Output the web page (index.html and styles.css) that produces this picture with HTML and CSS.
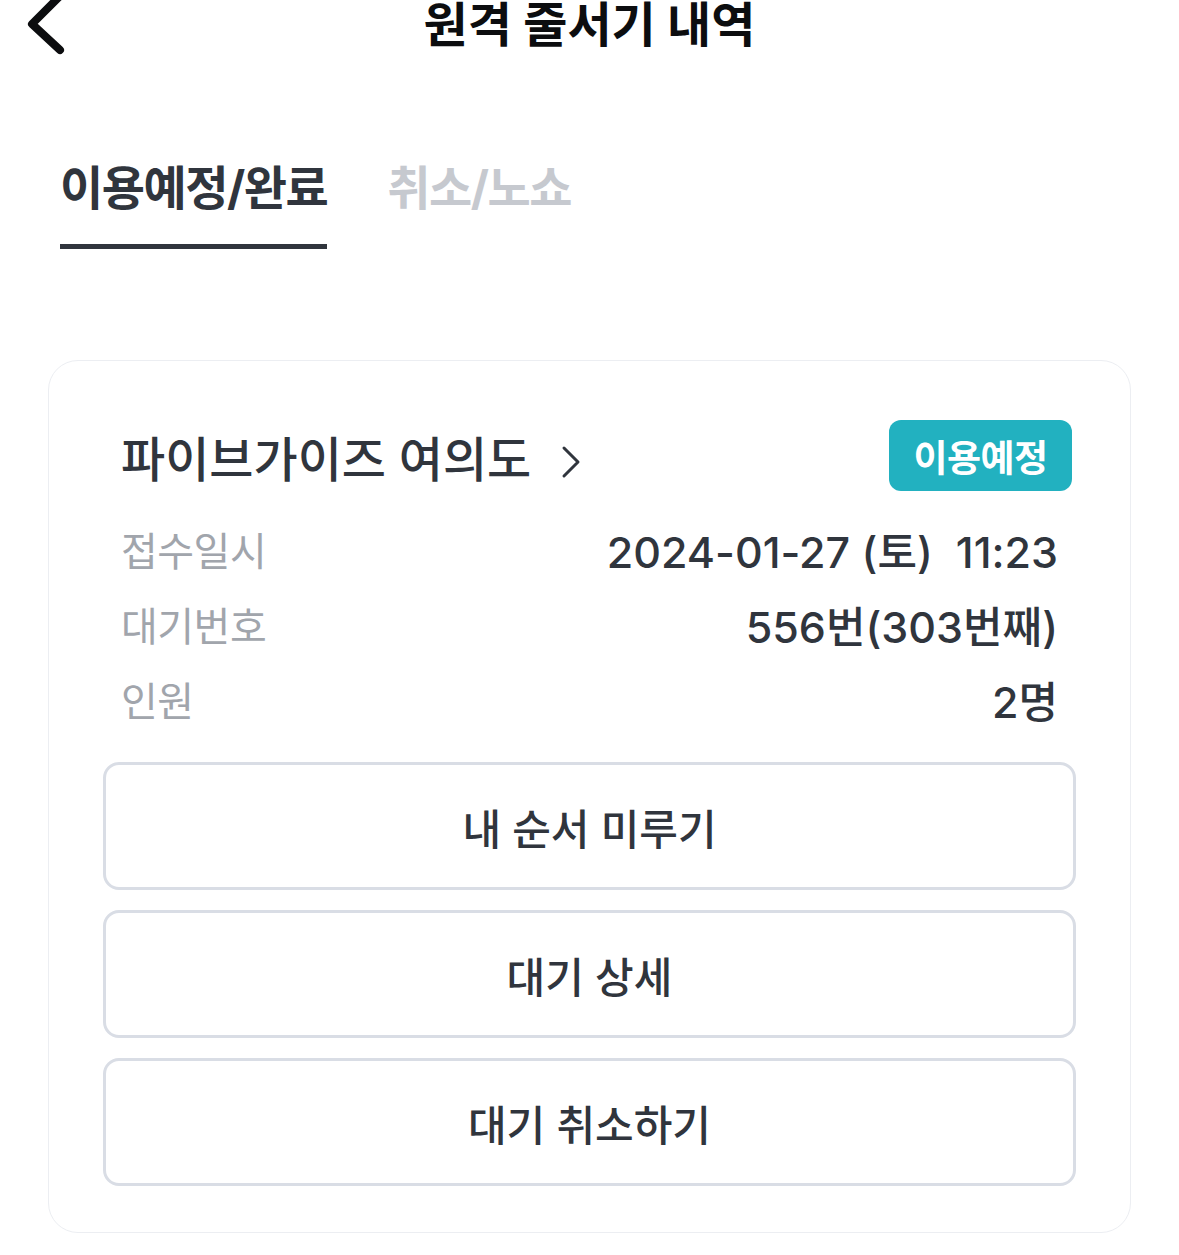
FILE: index.html
```html
<!DOCTYPE html>
<html lang="ko">
<head>
<meta charset="utf-8">
<link rel="stylesheet" href="styles.css">
</head>
<body>
<header class="header">
  <div class="back">
    <svg width="50" height="56" viewBox="0 0 50 56"><path d="M34 -4 L6 24 L34 50" fill="none" stroke="#0c0d0f" stroke-width="8" stroke-linecap="round" stroke-linejoin="round"/></svg>
  </div>
  <h1 class="title">원격 줄서기 내역</h1>
  <div class="spacer"></div>
</header>
<nav class="tabs">
  <div class="tab active">이용예정/완료</div>
  <div class="tab">취소/노쇼</div>
</nav>
<section class="card">
  <div class="card-head">
    <div class="store">파이브가이즈 여의도
      <svg class="chev" width="20" height="34" viewBox="0 0 20 34"><path d="M3 3 L17 17 L3 31" fill="none" stroke="#30353d" stroke-width="3" stroke-linecap="round" stroke-linejoin="round"/></svg>
    </div>
    <div class="badge">이용예정</div>
  </div>
  <div class="rows">
    <div class="row"><span class="label">접수일시</span><span class="value">2024-01-27 (토)&nbsp; 11:23</span></div>
    <div class="row"><span class="label">대기번호</span><span class="value">556번(303번째)</span></div>
    <div class="row"><span class="label">인원</span><span class="value">2명</span></div>
  </div>
  <div class="buttons">
    <button class="btn">내 순서 미루기</button>
    <button class="btn">대기 상세</button>
    <button class="btn">대기 취소하기</button>
  </div>
</section>
</body>
</html>
```
FILE: styles.css
```css
* { box-sizing: border-box; }
body {
  margin: 0;
  background: #fff;
  font-family: Inter, "Noto Sans CJK KR", sans-serif;
  color: #30353d;
  width: 1179px;
}
.header {
  display: grid;
  grid-template-columns: 120px 1fr 120px;
  align-items: start;
  height: 56px;
}
.back { padding-left: 26px; display: flex; }
.title {
  margin: 0;
  text-align: center;
  font-size: 48px;
  font-weight: 700;
  color: #0c0d0f;
  letter-spacing: 0;
  line-height: 50px;
}
.tabs {
  display: flex;
  gap: 60px;
  padding-left: 60px;
  margin-top: 100px;
}
.tab {
  font-size: 47px;
  font-weight: 700;
  color: #c6c9cf;
  letter-spacing: -1.5px;
  line-height: 64px;
  padding-bottom: 24px;
  border-bottom: 5px solid transparent;
}
.tab.active {
  color: #30353d;
  border-bottom-color: #30353d;
}
.card {
  margin: 111px 48px 0 48px;
  border: 1px solid #eceef2;
  border-radius: 30px;
  padding: 59px 54px 46px 54px;
}
.card-head {
  display: flex;
  justify-content: space-between;
  align-items: flex-start;
  padding-left: 18px;
  padding-right: 4px;
}
.store {
  font-size: 48px;
  font-weight: 500;
  letter-spacing: 0;
  margin-top: 10px;
  display: flex;
  align-items: center;
  gap: 30px;
  line-height: 60px;
}
.chev { margin-top: 4px; }
.badge {
  background: #22b1c0;
  color: #fff;
  border-radius: 12px;
  font-size: 37px;
  font-weight: 700;
  width: 183px;
  height: 71px;
  display: flex;
  align-items: center;
  justify-content: center;
  letter-spacing: -0.5px;
}
.rows {
  padding: 0 18px;
  margin-top: 20px;
}
.row {
  display: flex;
  justify-content: space-between;
  align-items: center;
  height: 75px;
  font-size: 40px;
}
.label { color: #a1a5ac; letter-spacing: -0.5px; }
.value { color: #30353d; font-weight: 500; letter-spacing: 0; font-size: 43px; }
.buttons {
  display: flex;
  flex-direction: column;
  gap: 20px;
  margin-top: 26px;
}
.btn {
  height: 128px;
  background: #fff;
  border: 3px solid #d9dde5;
  border-radius: 16px;
  font-family: inherit;
  font-size: 42px;
  font-weight: 500;
  color: #30353d;
  letter-spacing: 0;
}
```
